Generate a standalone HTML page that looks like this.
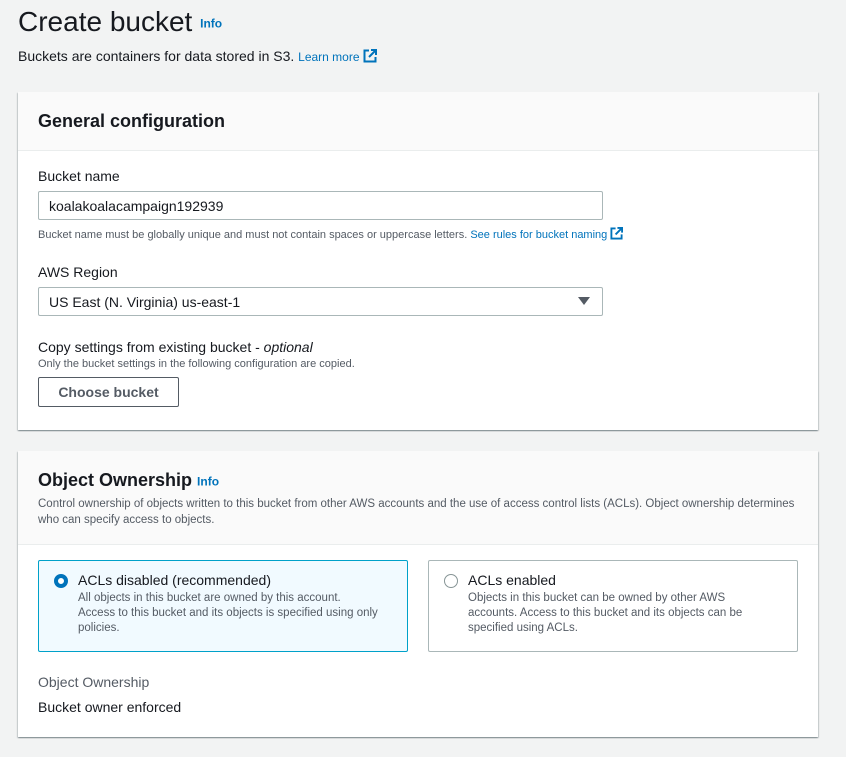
<!DOCTYPE html>
<html><head><style>
*{box-sizing:border-box;margin:0;padding:0}
body{width:846px;height:757px;background:#f2f3f3;font-family:"Liberation Sans",sans-serif;color:#16191f;position:relative;overflow:hidden}
.a{position:absolute;white-space:nowrap}
.card{position:absolute;left:18px;width:800px;background:#fff;box-shadow:0 1px 1px rgba(0,28,36,.3),1px 1px 1px rgba(0,28,36,.15),-1px 1px 1px rgba(0,28,36,.15)}
.hd{background:#fafafa;border-bottom:1px solid #eaeded;position:absolute;left:0;top:0;width:800px}
.link{color:#0073bb}
.small{font-size:12px;color:#545b64}
.inp{position:absolute;left:20px;width:565px;height:29px;border:1px solid #aab7b8;border-radius:2px;font-size:14px;padding:6px 10px}
</style></head><body>
<div class="a" style="left:18px;top:6px;font-size:28px">Create bucket <span class="link" style="font-size:12px;font-weight:bold;vertical-align:middle">Info</span></div>
<div class="a" style="left:18px;top:48px;font-size:14px">Buckets are containers for data stored in S3. <span class="link" style="font-size:12px">Learn more</span>
<svg width="14" height="14" viewBox="0 0 14 14" style="vertical-align:-2px"><path d="M6 1.5H1.5v11h11V8" fill="none" stroke="#0073bb" stroke-width="2"/><path d="M8 1h5v5M13 1L6 8" fill="none" stroke="#0073bb" stroke-width="2"/></svg></div>

<div class="card" style="top:92px;height:338px">
<div class="hd" style="height:59px"><div class="a" style="left:20px;top:19px;font-size:18px;font-weight:bold">General configuration</div></div>
<div class="a" style="left:20px;top:76px;font-size:14px">Bucket name</div>
<div class="inp" style="top:99px">koalakoalacampaign192939</div>
<div class="a small" style="left:20px;top:135px;font-size:11px">Bucket name must be globally unique and must not contain spaces or uppercase letters. <span class="link" style="font-size:11px">See rules for bucket naming</span>
<svg width="13" height="13" viewBox="0 0 14 14" style="vertical-align:-2px"><path d="M6 1.5H1.5v11h11V8" fill="none" stroke="#0073bb" stroke-width="2"/><path d="M8 1h5v5M13 1L6 8" fill="none" stroke="#0073bb" stroke-width="2"/></svg></div>
<div class="a" style="left:20px;top:172px;font-size:14px">AWS Region</div>
<div class="inp" style="top:195px">US East (N. Virginia) us-east-1<span style="position:absolute;right:12px;top:9px;width:0;height:0;border-left:6px solid transparent;border-right:6px solid transparent;border-top:8px solid #545b64"></span></div>
<div class="a" style="left:20px;top:247px;font-size:14px">Copy settings from existing bucket - <i>optional</i></div>
<div class="a small" style="left:20px;top:266px;font-size:11px">Only the bucket settings in the following configuration are copied.</div>
<div class="a" style="left:20px;top:285px;width:141px;height:30px;border:1px solid #545b64;border-radius:2px;font-size:14px;font-weight:bold;color:#545b64;text-align:center;line-height:28px">Choose bucket</div>
</div>

<div class="card" style="top:451px;height:286px">
<div class="hd" style="height:94px">
<div class="a" style="left:20px;top:19px;font-size:18px;font-weight:bold">Object Ownership <span class="link" style="font-size:12px;vertical-align:middle">Info</span></div>
<div class="a small" style="left:20px;top:45px;font-size:11.5px;line-height:16px;white-space:normal;width:770px">Control ownership of objects written to this bucket from other AWS accounts and the use of access control lists (ACLs). Object ownership determines who can specify access to objects.</div>
</div>
<div style="position:absolute;left:20px;top:109px;width:370px;height:92px;border:1px solid #00a1c9;background:#f1faff;border-radius:2px">
<div style="position:absolute;left:15px;top:13px;width:14px;height:14px;border-radius:50%;border:4px solid #0073bb;background:#fff"></div>
<div class="a" style="left:39px;top:11px;font-size:14px">ACLs disabled (recommended)</div>
<div class="a small" style="left:39px;top:30px;font-size:11.5px;line-height:15px;white-space:normal;width:300px">All objects in this bucket are owned by this account. Access to this bucket and its objects is specified using only policies.</div>
</div>
<div style="position:absolute;left:410px;top:109px;width:370px;height:92px;border:1px solid #aab7b8;border-radius:2px">
<div style="position:absolute;left:15px;top:13px;width:14px;height:14px;border-radius:50%;border:1px solid #879596;background:#fff"></div>
<div class="a" style="left:39px;top:11px;font-size:14px">ACLs enabled</div>
<div class="a small" style="left:39px;top:30px;font-size:11.5px;line-height:15px;white-space:normal;width:300px">Objects in this bucket can be owned by other AWS accounts. Access to this bucket and its objects can be specified using ACLs.</div>
</div>
<div class="a" style="left:20px;top:223px;font-size:14px;color:#545b64">Object Ownership</div>
<div class="a" style="left:20px;top:248px;font-size:14px">Bucket owner enforced</div>
</div>
</body></html>
